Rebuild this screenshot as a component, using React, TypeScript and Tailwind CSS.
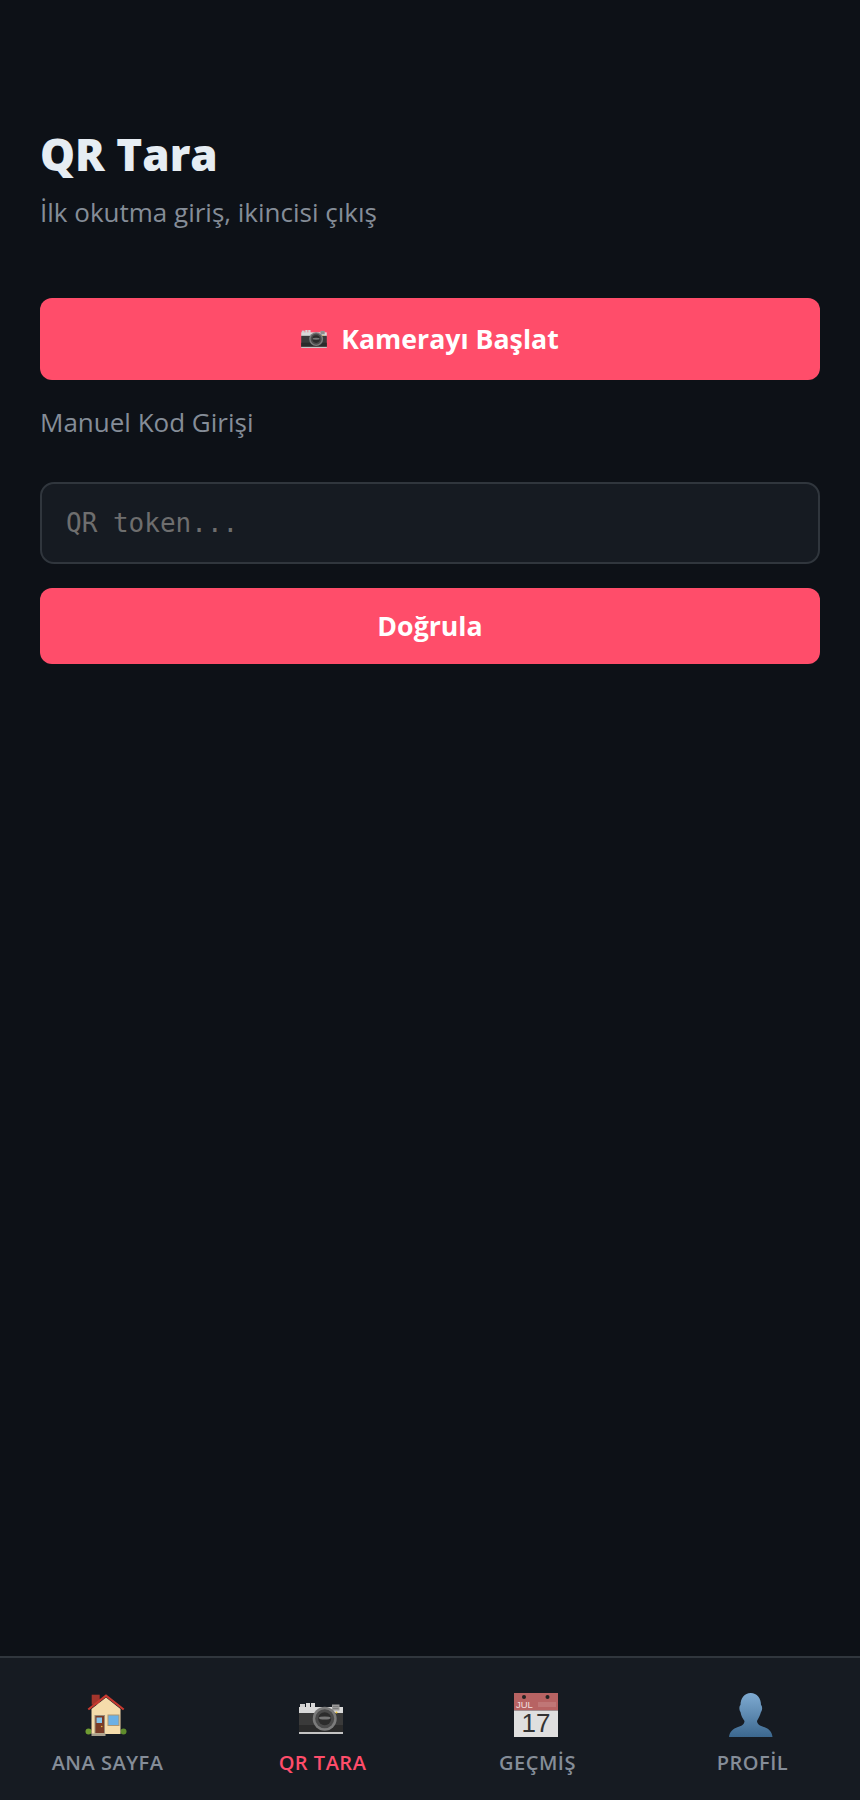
function HouseIcon() {
  return (
    <svg viewBox="0 0 42 42" className="h-[42px] w-[42px]">
      <rect x="6.7" y="0.7" width="8" height="10" fill="#a3352c" />
      <circle cx="3.5" cy="37.5" r="3" fill="#6f9c32" />
      <circle cx="38.5" cy="37.5" r="3" fill="#5f8c2c" />
      <path d="M6.5 15 21 3.5 35.5 15V40H6.5Z" fill="#f5dcab" />
      <path d="M3.3 15.5 21 1.6 38.7 15.5" fill="none" stroke="#c83a30" strokeWidth="2.2" />
      <rect x="9.5" y="21" width="10.5" height="18.5" fill="#9b8d79" />
      <rect x="10.5" y="22" width="8.5" height="17" fill="#7a3b27" />
      <rect x="11.5" y="23.5" width="5.5" height="5.5" fill="#86c3ea" />
      <circle cx="16.7" cy="32.5" r="0.8" fill="#eab53c" />
      <rect x="22.5" y="20.5" width="12" height="11.5" fill="#ad9673" />
      <rect x="23.5" y="21.5" width="10" height="9.5" fill="#6bb0e6" />
      <rect x="6.5" y="39.5" width="14" height="2.5" fill="#a8a08e" />
    </svg>
  );
}

function CameraIcon({ className }: { className: string }) {
  return (
    <svg viewBox="0 0 44 31" className={className}>
      <rect x="1" y="1" width="5" height="4" fill="#cfcfcf" />
      <rect x="7" y="0" width="4" height="5" fill="#d8d8d8" />
      <rect x="12" y="0" width="4" height="5" fill="#d8d8d8" />
      <rect x="0" y="4" width="44" height="7" fill="#d9d9d9" />
      <rect x="0" y="10" width="44" height="19" fill="#3a3a3a" />
      <rect x="0" y="22" width="44" height="7" fill="#2b2b2b" />
      <rect x="0" y="29" width="44" height="2" fill="#c4c4c4" />
      <rect x="33" y="1.5" width="7.5" height="6" fill="#9a9a9a" />
      <path d="M34 3.5h5.5M34 5.5h5.5" stroke="#6f6f6f" strokeWidth="0.7" />
      <circle cx="37.5" cy="9.5" r="1" fill="#e8c02f" />
      <circle cx="25.7" cy="15.7" r="12" fill="#7b7b7b" />
      <circle cx="25.7" cy="15.7" r="9.5" fill="#4b4b4b" />
      <circle cx="25.7" cy="15.7" r="6.5" fill="#2c2c2c" />
      <ellipse cx="25.7" cy="15" rx="6" ry="1.6" fill="#777777" />
    </svg>
  );
}

function CalendarIcon() {
  return (
    <svg viewBox="0 0 44 44" className="h-[44px] w-[44px] font-['Liberation_Sans',sans-serif]">
      <rect x="0" y="0" width="44" height="17.5" fill="#b76363" />
      <rect x="0" y="17.5" width="44" height="26.5" fill="#dfdfdf" />
      <path d="M25 9v5M27 9v5M29 9v5M31 9v5M33 9v5M35 9v5M37 9v5M39 9v5M41 9v5" stroke="#c98a8a" strokeWidth="1" />
      <circle cx="10" cy="4" r="2" fill="#222222" />
      <circle cx="33.5" cy="4" r="2" fill="#222222" />
      <text x="2" y="15" fontSize="9.5" fill="#f0dede">JUL</text>
      <text x="22" y="39" fontSize="26" textAnchor="middle" fill="#333333">17</text>
    </svg>
  );
}

function PersonIcon() {
  return (
    <svg viewBox="0 0 44 44" className="h-[44px] w-[44px]">
      <defs>
        <linearGradient id="person-fill" x1="0" y1="0" x2="0" y2="1">
          <stop offset="0" stopColor="#7fabd2" />
          <stop offset="1" stopColor="#3c688f" />
        </linearGradient>
      </defs>
      <path
        d="M21.7 0C28 0 32 5 32 12C33.5 13 33.5 17 32 19C31 23 29 26 28 28C28 31 31 33 35 34C40 35.5 43 39 43.5 44H0C.5 39 4 35.5 9 34C13 33 15.5 31 15.5 28C14 26 12 23 11.5 19C10 17 10 13 11.5 12C11.5 5 15.5 0 21.7 0Z"
        fill="url(#person-fill)"
      />
    </svg>
  );
}

const tabs = [
  { icon: <HouseIcon />, box: 'pb-px', label: 'ANA SAYFA', active: false },
  { icon: <CameraIcon className="h-[31px] w-[44px]" />, box: 'pb-[3px]', label: 'QR TARA', active: true },
  { icon: <CalendarIcon />, box: '', label: 'GEÇMİŞ', active: false },
  { icon: <PersonIcon />, box: '', label: 'PROFİL', active: false },
];

export default function App() {
  return (
    <div className="flex h-[1800px] flex-col bg-[#0d1117] font-['Open_Sans','Noto_Sans',sans-serif]">
      <main className="flex-1 px-10 pt-[124px]">
        <h1 className="text-[44px] leading-[60px] font-extrabold text-[#e6edf3]">QR Tara</h1>
        <p className="mt-[10px] text-[26px] leading-[36px] text-[#858d98]">İlk okutma giriş, ikincisi çıkış</p>
        <button className="mt-[68px] flex h-[82px] w-full items-center justify-center gap-[14px] rounded-xl bg-[#ff4d6a] text-[26.7px] font-bold text-white">
          <CameraIcon className="h-[18px] w-[26px]" />
          <span className="pt-px">Kamerayı Başlat</span>
        </button>
        <p className="mt-6 text-[26px] leading-[36px] text-[#858d98]">Manuel Kod Girişi</p>
        <input
          readOnly
          placeholder="QR token..."
          className="mt-[42px] block h-[82px] w-full rounded-[14px] border-2 border-[#30363d] bg-[#161b22] px-6 font-['DejaVu_Sans_Mono',monospace] text-[26px] text-white placeholder:text-[#6e6e6e]"
        />
        <button className="mt-6 h-[76px] w-full rounded-xl bg-[#ff4d6a] text-[26.7px] font-bold text-white">Doğrula</button>
      </main>
      <nav className="grid h-[144px] grid-cols-4 border-t-2 border-[#30363d] bg-[#161b22]">
        {tabs.map((tab) => (
          <div key={tab.label} className="flex flex-col items-center pt-[35px]">
            <div className={`flex h-[44px] items-end pr-[3px] ${tab.box}`}>{tab.icon}</div>
            <span className={`mt-3 text-[20px] leading-[28px] font-semibold tracking-[0.5px] ${tab.active ? 'text-[#ff4d6a]' : 'text-[#858d98]'}`}>{tab.label}</span>
          </div>
        ))}
      </nav>
    </div>
  );
}
